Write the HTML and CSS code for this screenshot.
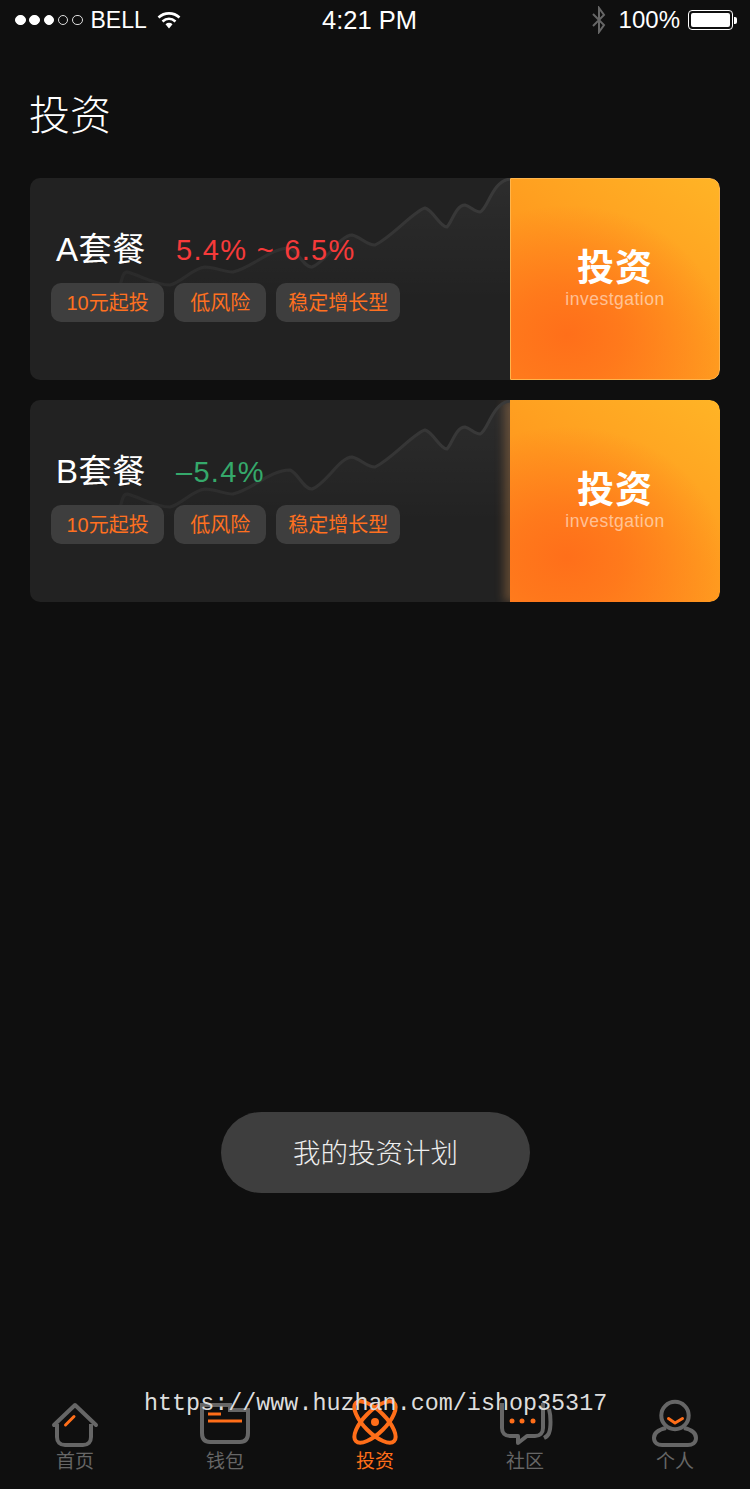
FILE: index.html

```html
<!DOCTYPE html>
<html lang="zh-CN">
<head>
  <meta charset="UTF-8" />
  <meta name="viewport" content="width=device-width, initial-scale=1" />
  <title>投资</title>
  <link rel="stylesheet" href="styles.css">
</head>
<body>
  <div class="page">

    <div class="status">
      <div class="status-left">
        <span class="dot on"></span><span class="dot on"></span><span class="dot on"></span><span class="dot"></span><span class="dot"></span>
        <span class="carrier">BELL</span>
        <svg class="wifi" width="24" height="18" viewBox="0 0 24 18">
          <path d="M1.5 6.5C7.5 1 16.5 1 22.5 6.5" fill="none" stroke="#fff" stroke-width="2.6"/>
          <path d="M5.5 10.5C9.5 7 14.5 7 18.5 10.5" fill="none" stroke="#fff" stroke-width="2.6"/>
          <path d="M8.5 13.2C10.5 11.4 13.5 11.4 15.5 13.2L12 17.5Z" fill="#fff"/>
        </svg>
      </div>
      <div class="time">4:21 PM</div>
      <div class="status-right">
        <svg class="bt" width="16" height="28" viewBox="0 0 16 28">
          <path d="M2 8L13 19L8 26V2L13 9L2 20" fill="none" stroke="#666" stroke-width="2"/>
        </svg>
        <span class="percent">100%</span>
        <div class="battery"><div class="battery-fill"></div></div>
        <div class="battery-tip"></div>
      </div>
    </div>

    <h1 class="title">投资</h1>

    <div class="card">
      <div class="card-info">
        <svg class="chart" width="480" height="202" viewBox="0 0 480 202">
          <defs>
            <linearGradient id="area1" x1="0" y1="0" x2="0" y2="1">
              <stop offset="0" stop-color="#fff" stop-opacity="0.05"/>
              <stop offset="0.6" stop-color="#fff" stop-opacity="0"/>
            </linearGradient>
            <linearGradient id="line1" gradientUnits="userSpaceOnUse" x1="90" y1="0" x2="480" y2="0">
              <stop offset="0" stop-color="#2a2a2a"/>
              <stop offset="1" stop-color="#3a3a3a"/>
            </linearGradient>
          </defs>
          <path d="M90 108C92 100 93 94 97 94C110 97 125 107 140 107C152 104 163 90 175 89C186 89 193 94 203 94C222 90 240 70 260 70C268 73 274 90 282 89C295 85 310 57 322 57C331 59 336 67 345 67C362 59 385 32 395 30C403 32 410 49 417 49C422 44 426 27 435 27C440 28 445 34 450 34C458 31 462 3 480 1V202H90Z" fill="url(#area1)"/>
          <path d="M90 108C92 100 93 94 97 94C110 97 125 107 140 107C152 104 163 90 175 89C186 89 193 94 203 94C222 90 240 70 260 70C268 73 274 90 282 89C295 85 310 57 322 57C331 59 336 67 345 67C362 59 385 32 395 30C403 32 410 49 417 49C422 44 426 27 435 27C440 28 445 34 450 34C458 31 462 3 480 1" fill="none" stroke="url(#line1)" stroke-width="3"/>
        </svg>
        <div class="card-head">
          <span class="plan">A套餐</span>
          <span class="rate rate-up">5.4% ~ 6.5%</span>
        </div>
        <div class="tags">
          <span class="tag">10元起投</span>
          <span class="tag tag-short">低风险</span>
          <span class="tag tag-long">稳定增长型</span>
        </div>
      </div>
      <div class="card-action">
        <div class="action-name">投资</div>
        <div class="action-en">investgation</div>
      </div>
    </div>

    <div class="card card-glow">
      <div class="card-info">
        <svg class="chart" width="480" height="202" viewBox="0 0 480 202">
          <defs>
            <linearGradient id="area2" x1="0" y1="0" x2="0" y2="1">
              <stop offset="0" stop-color="#fff" stop-opacity="0.05"/>
              <stop offset="0.6" stop-color="#fff" stop-opacity="0"/>
            </linearGradient>
            <linearGradient id="line2" gradientUnits="userSpaceOnUse" x1="90" y1="0" x2="480" y2="0">
              <stop offset="0" stop-color="#2a2a2a"/>
              <stop offset="1" stop-color="#3a3a3a"/>
            </linearGradient>
          </defs>
          <path d="M90 108C92 100 93 94 97 94C110 97 125 107 140 107C152 104 163 90 175 89C186 89 193 94 203 94C222 90 240 70 260 70C268 73 274 90 282 89C295 85 310 57 322 57C331 59 336 67 345 67C362 59 385 32 395 30C403 32 410 49 417 49C422 44 426 27 435 27C440 28 445 34 450 34C458 31 462 3 480 1V202H90Z" fill="url(#area2)"/>
          <path d="M90 108C92 100 93 94 97 94C110 97 125 107 140 107C152 104 163 90 175 89C186 89 193 94 203 94C222 90 240 70 260 70C268 73 274 90 282 89C295 85 310 57 322 57C331 59 336 67 345 67C362 59 385 32 395 30C403 32 410 49 417 49C422 44 426 27 435 27C440 28 445 34 450 34C458 31 462 3 480 1" fill="none" stroke="url(#line2)" stroke-width="3"/>
        </svg>
        <div class="card-head">
          <span class="plan">B套餐</span>
          <span class="rate rate-down">–5.4%</span>
        </div>
        <div class="tags">
          <span class="tag">10元起投</span>
          <span class="tag tag-short">低风险</span>
          <span class="tag tag-long">稳定增长型</span>
        </div>
      </div>
      <div class="card-action">
        <div class="action-name">投资</div>
        <div class="action-en">investgation</div>
      </div>
    </div>

    <div class="plan-btn">我的投资计划</div>

    <div class="tabbar">
      <div class="tab">
        <svg class="tab-icon" viewBox="0 0 60 48">
          <path d="M9 25L30 5L51 25" fill="none" stroke="#666" stroke-width="4" stroke-linecap="round" stroke-linejoin="round"/>
          <path d="M12 24V37C12 42 15 45 20 45H38C43 45 46 42 46 37V24" fill="none" stroke="#666" stroke-width="4"/>
          <path d="M20.5 25L29 16.5" fill="none" stroke="#ff6e19" stroke-width="3" stroke-linecap="round"/>
        </svg>
        <span>首页</span>
      </div>
      <div class="tab">
        <svg class="tab-icon" viewBox="0 0 60 48">
          <path d="M7 5H35V10H53V33C53 39 50 42 45 42H15C10 42 7 39 7 33Z" fill="none" stroke="#666" stroke-width="4"/>
          <path d="M13 14H26M13 21H47" fill="none" stroke="#ff6e19" stroke-width="3"/>
        </svg>
        <span>钱包</span>
      </div>
      <div class="tab tab-on">
        <svg class="tab-icon" viewBox="0 0 60 48">
          <ellipse cx="30" cy="22" rx="27" ry="11" transform="rotate(45 30 22)" fill="none" stroke="#ff6e19" stroke-width="4"/>
          <ellipse cx="30" cy="22" rx="27" ry="11" transform="rotate(-45 30 22)" fill="none" stroke="#ff6e19" stroke-width="4"/>
          <circle cx="30" cy="22" r="4" fill="#ff6e19"/>
        </svg>
        <span>投资</span>
      </div>
      <div class="tab">
        <svg class="tab-icon" viewBox="0 0 60 48">
          <path d="M7 3V28C7 33 10 36 15 36H23V43L32 36H40C45 36 48 33 48 28V3" fill="none" stroke="#666" stroke-width="4" stroke-linejoin="round"/>
          <path d="M54 9C56 16 56 28 54 33C53 36 51 37 49 38" fill="none" stroke="#666" stroke-width="4"/>
          <circle cx="17" cy="21" r="2.5" fill="#ff6e19"/>
          <circle cx="27" cy="21" r="2.5" fill="#ff6e19"/>
          <circle cx="38" cy="21" r="2.5" fill="#ff6e19"/>
        </svg>
        <span>社区</span>
      </div>
      <div class="tab">
        <svg class="tab-icon" viewBox="0 0 60 48">
          <circle cx="30" cy="15.5" r="13.7" fill="none" stroke="#666" stroke-width="4"/>
          <path d="M21 28C12 30 9 34 9 38C9 43 13 45 17 45H43C47 45 51 43 51 38C51 34 48 30 39 28" fill="none" stroke="#666" stroke-width="4"/>
          <path d="M23.5 18.5L30 23L37.5 18.5" fill="none" stroke="#ff6e19" stroke-width="3" stroke-linecap="round" stroke-linejoin="round"/>
        </svg>
        <span>个人</span>
      </div>
    </div>

    <div class="watermark">https://www.huzhan.com/ishop35317</div>
  </div>
</body>
</html>
```

FILE: styles.css

```css
* {
  box-sizing: border-box;
}

body {
  margin: 0;
  background: #0f0f0f;
  font-family: "Liberation Sans", "Noto Sans CJK SC", sans-serif;
  color: #fff;
}

.page {
  position: relative;
  width: 750px;
  height: 1489px;
  overflow: hidden;
  display: flex;
  flex-direction: column;
}

/* status bar */
.status {
  height: 40px;
  padding: 0 13px 0 15px;
  display: grid;
  grid-template-columns: 307px auto 1fr;
  align-items: center;
}
.status-left {
  display: flex;
  align-items: center;
}
.dot {
  width: 10.5px;
  height: 10.5px;
  margin-right: 3.8px;
  border-radius: 50%;
  border: 1px solid #ddd;
}
.dot.on {
  background: #fff;
  border-color: #fff;
}
.carrier {
  margin-left: 4px;
  font-size: 23px;
}
.wifi {
  margin-left: 10px;
  margin-top: 0;
}
.time {
  font-size: 25.5px;
}
.status-right {
  display: flex;
  align-items: center;
  justify-content: flex-end;
}
.percent {
  margin-left: 12px;
  font-size: 24px;
}
.battery {
  margin-left: 8px;
  width: 45px;
  height: 20px;
  padding: 2px;
  border: 1px solid #fff;
  border-radius: 4px;
}
.battery-fill {
  height: 100%;
  background: #fff;
  border-radius: 2px;
}
.battery-tip {
  width: 3px;
  height: 7px;
  margin-left: 1px;
  background: #fff;
  border-radius: 0 2px 2px 0;
}

.title {
  margin: 56px 0 41px 29px;
  font-size: 41px;
  line-height: 41px;
  font-weight: 300;
}

/* cards */
.card {
  display: flex;
  height: 202px;
  margin: 0 30px 20px;
  background: #222;
  border-radius: 10px;
  overflow: hidden;
}
.card-info {
  position: relative;
  width: 480px;
  padding: 51px 0 0 21px;
  overflow: hidden;
}
.chart {
  position: absolute;
  left: 0;
  top: 0;
}
.card-head {
  position: relative;
  display: flex;
  align-items: center;
  height: 42px;
  padding-left: 5px;
}
.plan {
  width: 120px;
  font-size: 33px;
  line-height: 44px;
  letter-spacing: 0.6px;
}
.rate {
  font-size: 29px;
  letter-spacing: 1.3px;
}
.rate-up {
  color: #f63a3a;
}
.rate-down {
  color: #35a96b;
}
.tags {
  position: relative;
  display: flex;
  gap: 10px;
  margin-top: 12px;
}
.tag {
  height: 39px;
  line-height: 40px;
  padding: 0 15.5px;
  background: #3e3e3e;
  border-radius: 10px;
  color: #ff7020;
  font-size: 20px;
}
.tag-short {
  padding: 0 16px;
}
.tag-long {
  padding: 0 12px;
}

.card-action {
  width: 210px;
  padding-top: 67px;
  border: 1px solid #ffb54d;
  border-radius: 0 10px 10px 0;
  background:
    radial-gradient(ellipse 75% 65% at 27% 78%, #ff6f1a 0, rgba(255, 112, 26, 0.75) 35%, rgba(255, 120, 26, 0) 100%),
    linear-gradient(35deg, #ff8a20 0%, #ff9c1f 50%, #ffb426 100%);
  text-align: center;
}
.card-glow .card-action {
  border: 0;
  padding-top: 68px;
  box-shadow: -6px 0 10px rgba(255, 170, 90, 0.28);
}
.action-name {
  font-size: 37px;
  line-height: 46px;
  font-weight: 700;
  letter-spacing: 1px;
}
.action-en {
  margin-top: -3px;
  font-size: 17.5px;
  line-height: 20px;
  color: rgba(255, 255, 255, 0.55);
  letter-spacing: 0.5px;
}

/* bottom button */
.plan-btn {
  width: 309px;
  height: 81px;
  margin: 490px 0 0 221px;
  background: #3e3e3e;
  border-radius: 41px;
  text-align: center;
  line-height: 83px;
  font-size: 27.5px;
  font-weight: 300;
  color: #eee;
}

/* tab bar */
.tabbar {
  display: flex;
  margin-top: auto;
  height: 89px;
}
.tab {
  width: 150px;
  display: flex;
  flex-direction: column;
  align-items: center;
  color: #666;
  font-size: 19px;
  line-height: 22px;
}
.tab-icon {
  display: block;
  width: 60px;
  height: 48px;
  margin-bottom: 3px;
  overflow: visible;
}
.tab-on {
  color: #ff6e19;
}

/* sits above the tab icons */
.watermark {
  position: absolute;
  left: 144px;
  top: 1389px;
  font-family: "Liberation Mono", monospace;
  font-size: 23.4px;
  line-height: 30px;
  color: #ddd;
  white-space: nowrap;
}
```
